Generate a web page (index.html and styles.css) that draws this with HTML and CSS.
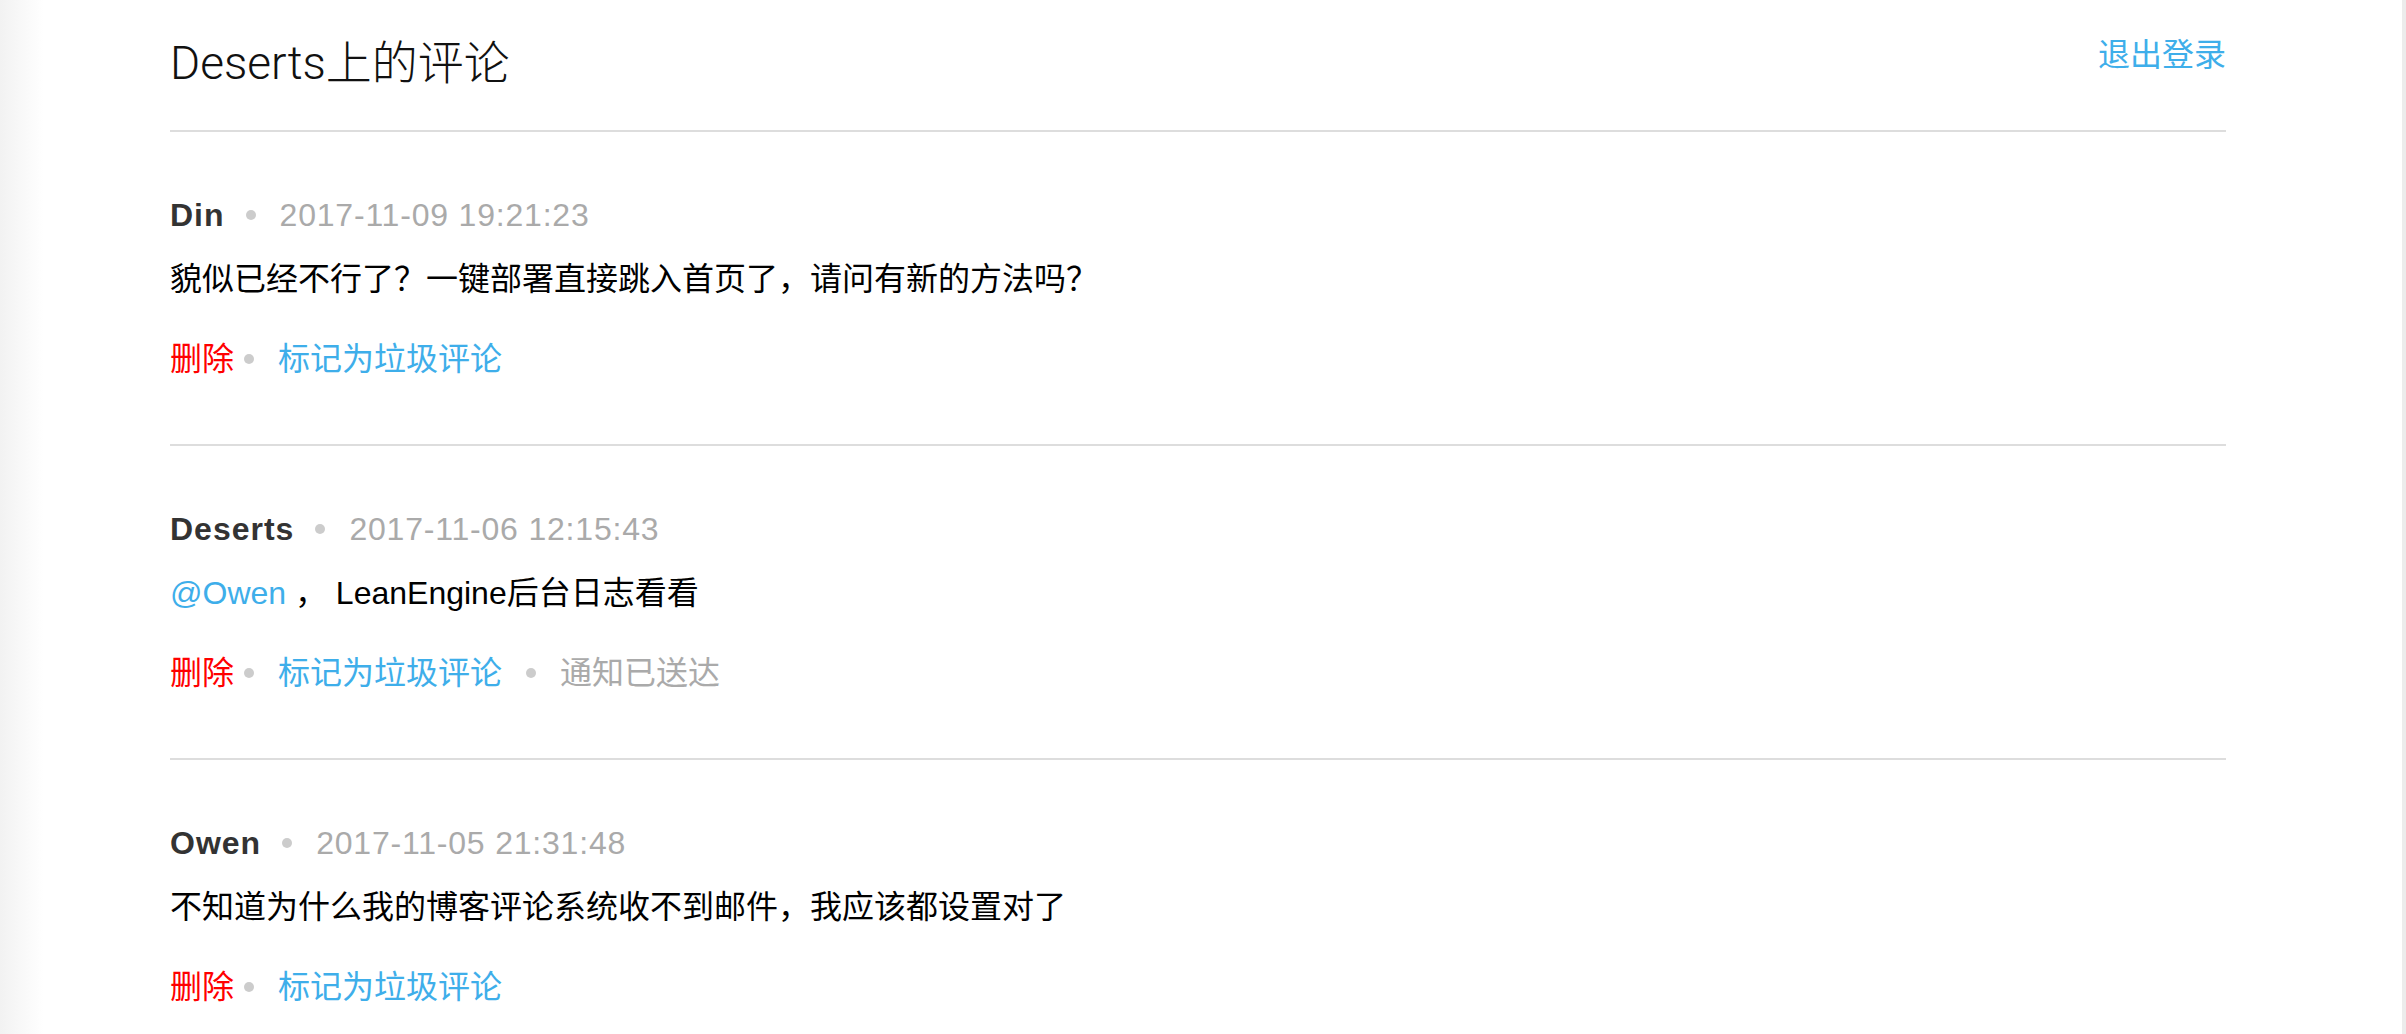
FILE: index.html
```html
<!DOCTYPE html>
<html lang="zh-CN">
<head>
  <meta charset="UTF-8" />
  <meta name="viewport" content="width=device-width, initial-scale=1.0"/>
  <title>Deserts上的评论</title>
  <link rel="stylesheet" href="styles.css">
</head>
<body>
  <div class="wrap">
    <header class="top">
      <h1>Deserts上的评论</h1>
      <a class="logout" href="#">退出登录</a>
    </header>

    <div class="comment">
      <div class="meta"><strong>Din</strong><span class="dot"></span><span class="time">2017-11-09 19:21:23</span></div>
      <p class="text">貌似已经不行了？一键部署直接跳入首页了，请问有新的方法吗？</p>
      <div class="actions"><a class="del" href="#">删除</a><span class="dot"></span><a href="#">标记为垃圾评论</a></div>
    </div>

    <div class="comment">
      <div class="meta"><strong>Deserts</strong><span class="dot"></span><span class="time">2017-11-06 12:15:43</span></div>
      <p class="text"><a href="#">@Owen</a> ， LeanEngine后台日志看看</p>
      <div class="actions"><a class="del" href="#">删除</a><span class="dot"></span><a href="#">标记为垃圾评论</a><span class="dot"></span><span class="sent">通知已送达</span></div>
    </div>

    <div class="comment">
      <div class="meta"><strong>Owen</strong><span class="dot"></span><span class="time">2017-11-05 21:31:48</span></div>
      <p class="text">不知道为什么我的博客评论系统收不到邮件，我应该都设置对了</p>
      <div class="actions"><a class="del" href="#">删除</a><span class="dot"></span><a href="#">标记为垃圾评论</a></div>
    </div>
  </div>
</body>
</html>
```

FILE: styles.css
```css
html, body { margin:0; height:100%; }
body { font-family:"Liberation Sans","Noto Sans CJK SC",sans-serif; font-size:32px; color:#111; background:linear-gradient(to right,#f2f2f2 0,#fff 44px); border-right:4px solid #ececec; box-sizing:border-box; overflow:hidden; }
a { color:#3eaeea; text-decoration:none; }
.wrap { margin:0 176px 0 170px; }
.top { display:flex; justify-content:space-between; align-items:flex-start; padding:36px 0 39px; border-bottom:2px solid #ddd; }
.top h1 { margin:0; font-family:Roboto,"Noto Sans CJK SC",sans-serif; font-weight:300; font-size:46px; line-height:55px; color:#111; }
.logout { font-size:32px; line-height:38px; }
.comment { padding:59px 0 61px; border-bottom:2px solid #ddd; }
.meta, .text, .actions { display:flex; align-items:center; height:48px; line-height:48px; margin:0; }
.text { margin:16px 0 32px; color:#000; white-space:pre; }
.meta strong { color:#333; letter-spacing:1px; }
.time { color:#aaa; letter-spacing:0.8px; }
.dot { display:inline-block; width:10px; height:10px; border-radius:50%; background:#ccc; margin:0 24px; }
.meta .dot { margin-left:21px; }
.del { color:#f00; }
.del + .dot { margin-left:10px; }
.sent { color:#aaa; }
```
